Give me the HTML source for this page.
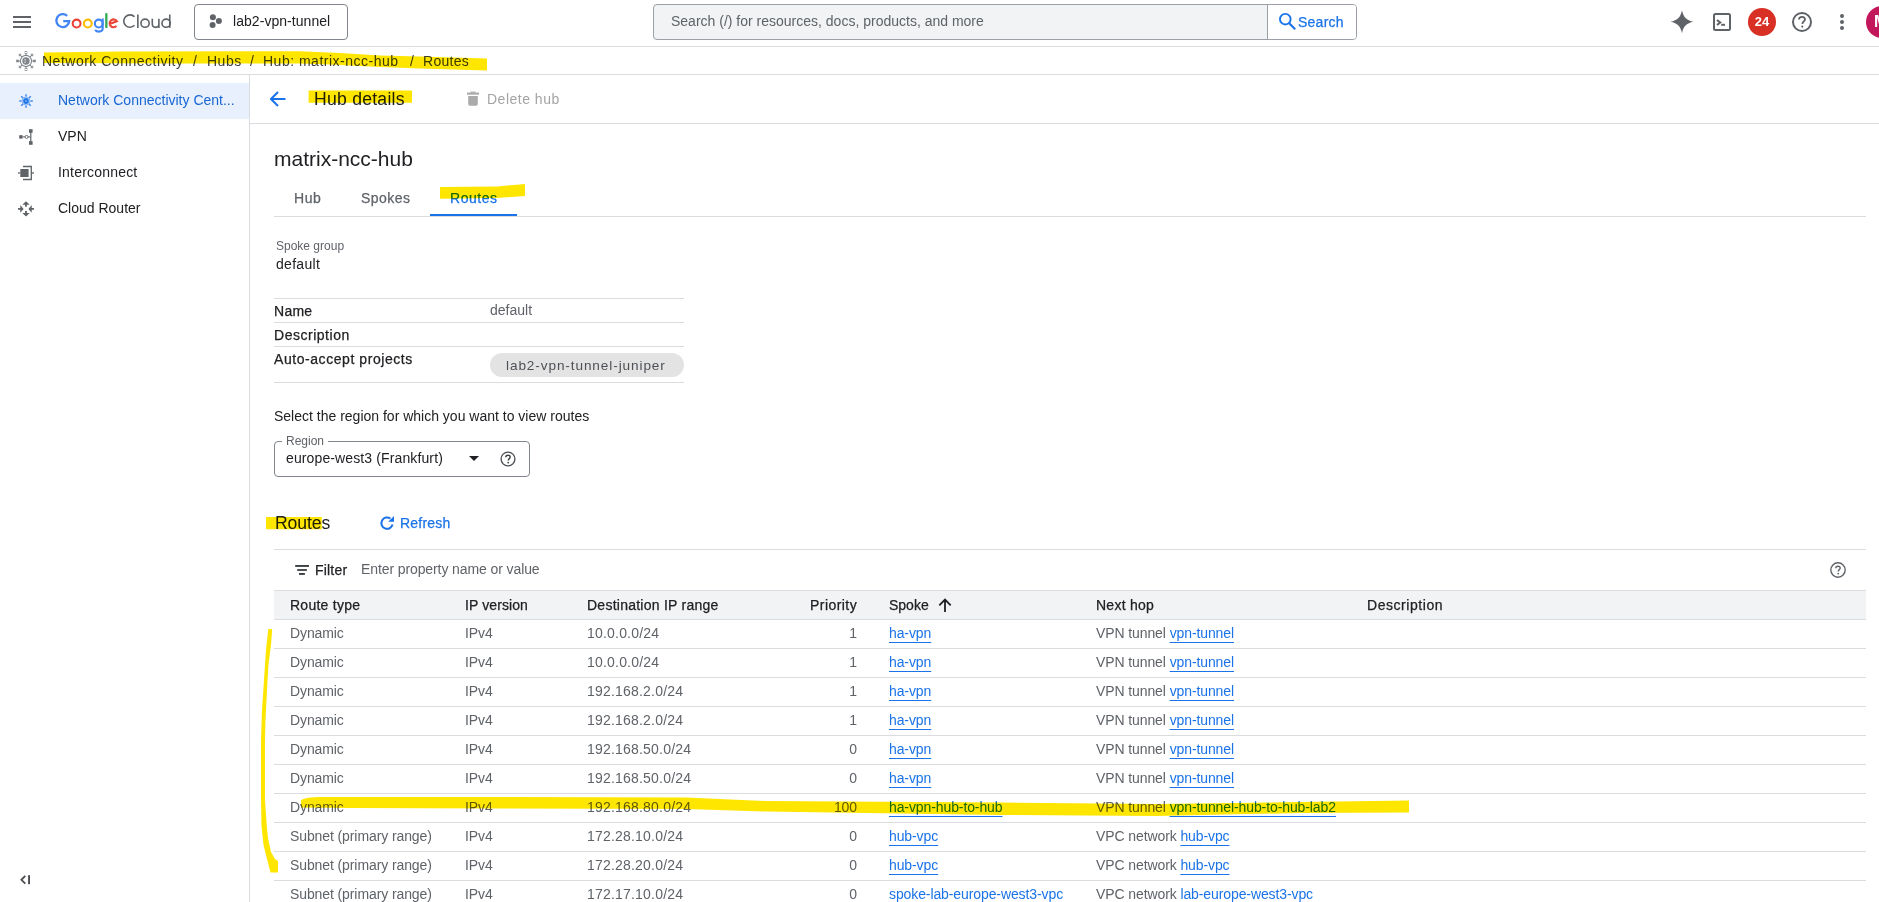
<!DOCTYPE html>
<html><head><meta charset="utf-8">
<style>
*{box-sizing:border-box;margin:0;padding:0}
html,body{width:1879px;height:902px;overflow:hidden;background:#fff;font-family:"Liberation Sans",sans-serif;color:#202124}
.a{position:absolute;white-space:nowrap;line-height:20px;font-size:14px}
.m{-webkit-text-stroke:0.25px currentColor}
.hl{position:absolute;mix-blend-mode:multiply}
.ln{position:absolute;background:#dadce0;height:1px}
a,.lk{color:#1a73e8;text-decoration:underline;text-underline-offset:4px;text-decoration-thickness:1px}

.row{position:absolute;left:0;height:20px;width:1879px;font-size:14px;line-height:20px;color:#5f6368;white-space:nowrap;letter-spacing:-0.1px}
.row span{position:absolute}
.row .c6 span{position:static}
.c1{left:290px}.c2{left:465px}.c3{left:587px;letter-spacing:0.2px}.c4{left:759px;width:98px;text-align:right}.c5{left:889px}.c6{left:1096px}
</style></head><body>

<!-- TOP BAR -->
<div id="top" style="position:absolute;left:0;top:0;width:1879px;height:46px;background:#fff"></div>
<div class="ln" style="left:0;top:46px;width:1879px"></div>
<!-- hamburger -->
<div style="position:absolute;left:13px;top:16px;width:18px;height:2px;background:#5f6368"></div>
<div style="position:absolute;left:13px;top:21px;width:18px;height:2px;background:#5f6368"></div>
<div style="position:absolute;left:13px;top:26px;width:18px;height:2px;background:#5f6368"></div>
<!-- logo -->
<svg style="position:absolute;left:0;top:0" width="180" height="40" viewBox="0 0 180 40"><g fill="none" stroke-linecap="butt">
<path d="M67.15 15.84 A6.45 6.45 0 1 0 69.23 21.1 H63.2" stroke="#4285f4" stroke-width="2.3"/>
<circle cx="76.6" cy="23.55" r="3.9" stroke="#ea4335" stroke-width="2.1"/>
<circle cx="87.8" cy="23.55" r="3.9" stroke="#fbbc04" stroke-width="2.1"/>
<circle cx="98.75" cy="23.55" r="3.9" stroke="#4285f4" stroke-width="2.1"/>
<path d="M102.7 18.6 V28.3 Q102.7 31.6 98.8 31.6 Q96.4 31.6 95.1 29.8" stroke="#4285f4" stroke-width="2.1"/>
<path d="M106.35 13.2 V27.9" stroke="#34a853" stroke-width="2.3"/>
<path d="M109.6 24 L116.9 21.3 A3.9 3.9 0 1 0 116.5 25.9" stroke="#ea4335" stroke-width="2.1"/>
<path d="M134.5 16.8 A6.2 6.2 0 1 0 134.5 25.3" stroke="#5f6368" stroke-width="1.6"/>
<path d="M137.85 14.4 V27.9" stroke="#5f6368" stroke-width="1.6"/>
<circle cx="145.05" cy="23.2" r="4.1" stroke="#5f6368" stroke-width="1.6"/>
<path d="M152.3 18.8 V24.1 A3.3 3.3 0 0 0 158.9 24.1 M158.9 18.8 V28" stroke="#5f6368" stroke-width="1.6"/>
<circle cx="166.1" cy="23.2" r="4.1" stroke="#5f6368" stroke-width="1.6"/>
<path d="M169.75 14.5 V27.9" stroke="#5f6368" stroke-width="1.6"/>
</g></svg>
<!-- project picker -->
<div style="position:absolute;left:194px;top:4px;width:154px;height:36px;border:1px solid #80868b;border-radius:4px"></div>
<svg style="position:absolute;left:208px;top:13px" width="18" height="18" viewBox="0 0 18 18"><circle cx="4.9" cy="4.3" r="3" fill="#5f6368"/><circle cx="10.9" cy="8" r="3" fill="#5f6368"/><circle cx="4.6" cy="12" r="3" fill="#5f6368"/></svg>
<div class="a" id="proj" style="left:233px;top:11px;letter-spacing:0.05px">lab2-vpn-tunnel</div>
<!-- search -->
<div style="position:absolute;left:653px;top:4px;width:704px;height:36px;border:1px solid #9aa0a6;border-radius:4px;background:#f1f3f4;overflow:hidden">
  <div style="position:absolute;left:613px;top:0;width:90px;height:34px;background:#fff;border-left:1px solid #9aa0a6"></div>
</div>
<div class="a" id="sph" style="left:671px;top:11px;color:#5f6368">Search (/) for resources, docs, products, and more</div>
<svg style="position:absolute;left:1278px;top:12px" width="20" height="20" viewBox="0 0 20 20"><circle cx="7.3" cy="7.2" r="5.3" fill="none" stroke="#1a73e8" stroke-width="1.9"/><line x1="11.2" y1="11.2" x2="17.2" y2="17.3" stroke="#1a73e8" stroke-width="2.1"/></svg>
<div class="a m" id="sbtn" style="left:1298px;top:12px;color:#1a73e8;letter-spacing:0.25px">Search</div>
<!-- right icons -->
<svg style="position:absolute;left:1670px;top:10px" width="24" height="24" viewBox="0 0 24 24"><path d="M12 0.3 C13.2 6.8 16.4 10.6 23.6 11.8 C16.4 13 13.2 16.8 12 23.3 C10.8 16.8 7.6 13 0.4 11.8 C7.6 10.6 10.8 6.8 12 0.3Z" fill="#5f6368"/></svg>
<svg style="position:absolute;left:1712px;top:12px" width="20" height="20" viewBox="0 0 20 20"><rect x="2" y="2" width="16" height="16" rx="1.5" fill="none" stroke="#5f6368" stroke-width="2"/><path d="M5 8 L8.2 10.5 L5 13" fill="none" stroke="#5f6368" stroke-width="2.1"/><rect x="9.2" y="11.8" width="3.8" height="2" fill="#5f6368"/></svg>
<div style="position:absolute;left:1748px;top:8px;width:28px;height:28px;border-radius:50%;background:#d93025"></div>
<div class="a" style="left:1748px;top:12px;width:28px;text-align:center;color:#fff;font-weight:bold;font-size:13px">24</div>
<svg style="position:absolute;left:1791px;top:11px" width="22" height="22" viewBox="0 0 22 22"><circle cx="11" cy="11" r="9" fill="none" stroke="#5f6368" stroke-width="2"/><path d="M8 8.6 C8 6.8 9.4 5.8 11 5.8 C12.7 5.8 14 6.9 14 8.4 C14 10.3 11.4 10.6 11.4 13" fill="none" stroke="#5f6368" stroke-width="1.8"/><circle cx="11.3" cy="15.6" r="1.1" fill="#5f6368"/></svg>
<svg style="position:absolute;left:1838px;top:12px" width="8" height="20" viewBox="0 0 8 20"><circle cx="4" cy="4" r="2" fill="#5f6368"/><circle cx="4" cy="10" r="2" fill="#5f6368"/><circle cx="4" cy="16" r="2" fill="#5f6368"/></svg>
<div style="position:absolute;left:1866px;top:6px;width:32px;height:32px;border-radius:50%;background:#c2185b"></div>
<div class="a" style="left:1874px;top:12px;color:#fff;font-size:16px;font-weight:bold">M</div>

<!-- BREADCRUMB -->
<div class="ln" style="left:0;top:74px;width:1879px"></div>
<svg style="position:absolute;left:16px;top:51px" width="20" height="20" viewBox="0 0 20 20"><circle cx="10" cy="10" r="5.6" fill="none" stroke="#80868b" stroke-width="1.1"/><circle cx="10" cy="10" r="3.7" fill="#80868b"/><rect x="8.3" y="8.2" width="1.6" height="1.2" fill="#fff" opacity="0.7"/><rect x="8.3" y="10.6" width="1.6" height="1.2" fill="#fff" opacity="0.7"/><g stroke="#80868b" stroke-width="1"><line x1="10" y1="2.2" x2="10" y2="4.4"/><line x1="10" y1="15.6" x2="10" y2="17.8"/><line x1="2.2" y1="10" x2="4.4" y2="10"/><line x1="15.6" y1="10" x2="17.8" y2="10"/><line x1="4.5" y1="4.5" x2="6" y2="6"/><line x1="14" y1="14" x2="15.5" y2="15.5"/><line x1="15.5" y1="4.5" x2="14" y2="6"/><line x1="6" y1="14" x2="4.5" y2="15.5"/></g><g fill="none" stroke="#80868b" stroke-width="0.8"><rect x="9.1" y="0.6" width="1.8" height="1.8"/><rect x="9.1" y="17.6" width="1.8" height="1.8"/><rect x="0.6" y="9.1" width="1.8" height="1.8"/><rect x="17.6" y="9.1" width="1.8" height="1.8"/><rect x="3.2" y="3.2" width="1.6" height="1.6"/><rect x="15.2" y="3.2" width="1.6" height="1.6"/><rect x="3.2" y="15.2" width="1.6" height="1.6"/><rect x="15.2" y="15.2" width="1.6" height="1.6"/></g></svg>
<div class="a" style="left:42px;top:51px;color:#3c4043;letter-spacing:0.5px">Network Connectivity</div>
<div class="a" style="left:193px;top:51px;color:#3c4043">/</div>
<div class="a" style="left:207px;top:51px;color:#3c4043;letter-spacing:0.5px">Hubs</div>
<div class="a" style="left:250px;top:51px;color:#3c4043">/</div>
<div class="a" style="left:263px;top:51px;color:#3c4043;letter-spacing:0.5px">Hub: matrix-ncc-hub</div>
<div class="a" style="left:410px;top:51px;color:#3c4043">/</div>
<div class="a" style="left:423px;top:51px;color:#3c4043;letter-spacing:0.3px">Routes</div>

<!-- SIDEBAR -->
<div style="position:absolute;left:249px;top:75px;width:1px;height:827px;background:#dadce0"></div>
<div style="position:absolute;left:0;top:83px;width:249px;height:36px;background:#e8f0fe"></div>
<div class="a" id="nav1" style="left:58px;top:90px;color:#1967d2">Network Connectivity Cent...</div>
<div class="a" id="nav2" style="left:58px;top:126px;color:#202124">VPN</div>
<div class="a" id="nav3" style="left:58px;top:162px;color:#202124;letter-spacing:0.2px">Interconnect</div>
<div class="a" id="nav4" style="left:58px;top:198px;color:#202124">Cloud Router</div>
<svg style="position:absolute;left:20px;top:874px" width="11" height="11" viewBox="0 0 11 11"><path d="M5.3 1.9 L1.4 5.8 L5.3 9.7" fill="none" stroke="#4a4e52" stroke-width="1.8"/><rect x="8.1" y="1.2" width="1.9" height="9" fill="#4a4e52"/></svg>


<!-- sidebar icons -->
<svg style="position:absolute;left:18px;top:93px" width="16" height="16" viewBox="0 0 16 16"><g stroke="#1a73e8" stroke-width="1.5" opacity="0.8"><line x1="8" y1="1.2" x2="8" y2="3.6"/><line x1="8" y1="12.4" x2="8" y2="14.8"/><line x1="1.2" y1="8" x2="3.6" y2="8"/><line x1="12.4" y1="8" x2="14.8" y2="8"/><line x1="3.2" y1="3.2" x2="4.9" y2="4.9"/><line x1="11.1" y1="11.1" x2="12.8" y2="12.8"/><line x1="12.8" y1="3.2" x2="11.1" y2="4.9"/><line x1="4.9" y1="11.1" x2="3.2" y2="12.8"/></g><circle cx="8" cy="8" r="4" fill="none" stroke="#1a73e8" stroke-width="0.7" opacity="0.7"/><circle cx="8" cy="8" r="2.9" fill="#1a73e8"/><circle cx="8" cy="8" r="1.3" fill="#5a9af0"/></svg>
<svg style="position:absolute;left:18px;top:129px" width="16" height="16" viewBox="0 0 16 16"><rect x="1.2" y="6.2" width="3.4" height="3.4" fill="#5f6368"/><line x1="4.6" y1="7.9" x2="7" y2="7.9" stroke="#5f6368" stroke-width="1"/><circle cx="8.6" cy="7.9" r="1.5" fill="none" stroke="#5f6368" stroke-width="0.9"/><line x1="10.1" y1="7.9" x2="12.5" y2="7.9" stroke="#5f6368" stroke-width="1"/><line x1="12.8" y1="2" x2="12.8" y2="14" stroke="#5f6368" stroke-width="1.2"/><rect x="11" y="0.2" width="3.6" height="3.6" fill="#5f6368"/><rect x="11" y="12.2" width="3.6" height="3.6" fill="#5f6368"/></svg>
<svg style="position:absolute;left:18px;top:165px" width="16" height="16" viewBox="0 0 16 16"><rect x="2.3" y="4" width="8.3" height="8" fill="#5f6368"/><path d="M5 1.5 H13.3 V14.5 H5" fill="none" stroke="#5f6368" stroke-width="1.3"/><line x1="0" y1="8" x2="2.3" y2="8" stroke="#5f6368" stroke-width="1.3"/><line x1="13.3" y1="8" x2="16" y2="8" stroke="#5f6368" stroke-width="1.3"/></svg>
<svg style="position:absolute;left:18px;top:201px" width="16" height="16" viewBox="0 0 16 16"><g fill="#5f6368"><path d="M8 0.2 L11.7 3.7 H8.9 V5.7 H7.1 V3.7 H4.3Z"/><path d="M8 15.6 L11.7 12.1 H8.9 V10.1 H7.1 V12.1 H4.3Z"/><path d="M5.6 7.9 L2.3 4.1 V7 H0 V8.8 H2.3 V11.7Z"/><path d="M10.4 7.9 L13.7 4.1 V7 H16 V8.8 H13.7 V11.7Z"/></g></svg>

<!-- HEADER -->
<div class="ln" style="left:250px;top:123px;width:1629px"></div>


<!-- back arrow -->
<svg style="position:absolute;left:270px;top:91px" width="16" height="16" viewBox="0 0 16 16"><path d="M8 1 L1 8 L8 15 M1.5 8 H15.5" fill="none" stroke="#1a73e8" stroke-width="2"/></svg>
<div class="a" id="hd" style="left:314px;top:89px;font-size:17.6px;letter-spacing:0.25px">Hub details</div>
<svg style="position:absolute;left:466px;top:91px" width="14" height="16" viewBox="0 0 14 16"><rect x="1" y="1.6" width="12" height="2.1" fill="#ababab"/><rect x="4.3" y="0.6" width="5.4" height="1.2" fill="#ababab"/><path d="M2.2 5 H11.8 V13 Q11.8 14.7 10.1 14.7 H3.9 Q2.2 14.7 2.2 13 Z" fill="#ababab"/></svg>
<div class="a" id="del" style="left:487px;top:89px;color:#a4a4a4;letter-spacing:0.5px">Delete hub</div>

<div class="a" id="title" style="left:274px;top:149px;font-size:21px">matrix-ncc-hub</div>
<div class="a m" style="left:294px;top:188px;color:#5f6368;letter-spacing:0.6px">Hub</div>
<div class="a m" style="left:361px;top:188px;color:#5f6368;letter-spacing:0.45px">Spokes</div>
<div class="a m" style="left:450px;top:188px;color:#1a73e8;letter-spacing:0.55px">Routes</div>
<div style="position:absolute;left:430px;top:214px;width:87px;height:3px;background:#1a73e8"></div>
<div class="ln" style="left:274px;top:216px;width:1592px"></div>

<div class="a" style="left:276px;top:236px;font-size:12px;color:#5f6368">Spoke group</div>
<div class="a" style="left:276px;top:254px;letter-spacing:0.3px">default</div>
<div class="ln" style="left:274px;top:298px;width:410px"></div>
<div class="ln" style="left:274px;top:322px;width:410px"></div>
<div class="ln" style="left:274px;top:346px;width:410px"></div>
<div class="ln" style="left:274px;top:382px;width:410px"></div>
<div class="a m" style="left:274px;top:301px;letter-spacing:0.27px">Name</div>
<div class="a" style="left:490px;top:300px;color:#5f6368">default</div>
<div class="a m" style="left:274px;top:325px;letter-spacing:0.52px">Description</div>
<div class="a m" style="left:274px;top:349px;letter-spacing:0.56px">Auto-accept projects</div>
<div style="position:absolute;left:490px;top:353px;width:194px;height:24px;border-radius:12px;background:#e3e3e3"></div>
<div class="a" id="chip" style="left:506px;top:356px;font-size:13.6px;color:#4d5156;letter-spacing:0.9px">lab2-vpn-tunnel-juniper</div>

<div class="a" style="left:274px;top:406px">Select the region for which you want to view routes</div>
<div style="position:absolute;left:274px;top:441px;width:256px;height:36px;border:1px solid #80868b;border-radius:4px"></div>
<div class="a" style="left:282px;top:431px;font-size:12px;color:#5f6368;background:#fff;padding:0 4px">Region</div>
<div class="a" style="left:286px;top:448px;letter-spacing:0.12px">europe-west3 (Frankfurt)</div>
<svg style="position:absolute;left:469px;top:456px" width="10" height="5" viewBox="0 0 10 5"><path d="M0 0 H10 L5 5Z" fill="#202124"/></svg>
<svg style="position:absolute;left:499px;top:450px" width="18" height="18" viewBox="0 0 18 18"><circle cx="9" cy="9" r="6.9" fill="none" stroke="#4a4e52" stroke-width="1.35"/><path d="M6.8 7.3 C6.8 5.9 7.8 5.2 9 5.2 C10.3 5.2 11.2 6 11.2 7.1 C11.2 8.6 9.2 8.7 9.2 10.6" fill="none" stroke="#3c4043" stroke-width="1.4"/><circle cx="9.2" cy="12.6" r="0.9" fill="#3c4043"/></svg>

<div class="a" id="rt" style="left:275px;top:513px;font-size:17.6px;letter-spacing:-0.1px">Routes</div>
<svg style="position:absolute;left:379px;top:515px" width="16" height="16" viewBox="0 0 16 16"><path d="M13.6 9.6 A5.7 5.7 0 1 1 11.4 3.5" fill="none" stroke="#1a73e8" stroke-width="2"/><path d="M9.2 6.8 H15 V1 Z" fill="#1a73e8"/></svg>
<div class="a m" style="left:400px;top:513px;color:#1a73e8;letter-spacing:0.2px">Refresh</div>
<div class="ln" style="left:274px;top:549px;width:1592px"></div>
<svg style="position:absolute;left:295px;top:564px" width="14" height="11" viewBox="0 0 14 11"><rect x="0.2" y="1" width="13.8" height="1.9" fill="#3c4043"/><rect x="2.2" y="5.1" width="9.7" height="1.8" fill="#3c4043"/><rect x="4" y="9" width="5.9" height="1.9" fill="#3c4043"/></svg>
<div class="a m" style="left:315px;top:560px;letter-spacing:0.2px">Filter</div>
<div class="a" style="left:361px;top:559px;color:#5f6368;letter-spacing:-0.1px">Enter property name or value</div>
<svg style="position:absolute;left:1829px;top:561px" width="18" height="18" viewBox="0 0 18 18"><circle cx="9" cy="9" r="7.2" fill="none" stroke="#5f6368" stroke-width="1.4"/><path d="M6.8 7.3 C6.8 5.9 7.8 5.2 9 5.2 C10.3 5.2 11.2 6 11.2 7.1 C11.2 8.6 9.2 8.7 9.2 10.6" fill="none" stroke="#5f6368" stroke-width="1.4"/><circle cx="9.2" cy="12.6" r="0.9" fill="#5f6368"/></svg>

<div style="position:absolute;left:274px;top:590px;width:1592px;height:30px;background:#f1f3f4;border-top:1px solid #dadce0;border-bottom:1px solid #dadce0"></div>
<div class="a m" style="left:290px;top:595px;letter-spacing:0.25px">Route type</div>
<div class="a m" style="left:465px;top:595px;letter-spacing:0.1px">IP version</div>
<div class="a m" style="left:587px;top:595px;letter-spacing:0.25px">Destination IP range</div>
<div class="a m" style="left:810px;top:595px;letter-spacing:0.45px">Priority</div>
<div class="a m" style="left:889px;top:595px">Spoke</div>
<svg style="position:absolute;left:938px;top:598px" width="14" height="15" viewBox="0 0 14 15"><path d="M7 14 V1.8 M1.3 7.3 L7 1.6 L12.7 7.3" fill="none" stroke="#202124" stroke-width="1.8"/></svg>
<div class="a m" style="left:1096px;top:595px;letter-spacing:0.25px">Next hop</div>
<div class="a m" style="left:1367px;top:595px;letter-spacing:0.55px">Description</div>
<div class="row" style="top:623px"><span class="c1">Dynamic</span><span class="c2">IPv4</span><span class="c3">10.0.0.0/24</span><span class="c4">1</span><span class="c5 lk">ha-vpn</span><span class="c6">VPN tunnel <span class="lk">vpn-tunnel</span></span></div>
<div class="ln" style="left:274px;top:648px;width:1592px"></div>
<div class="row" style="top:652px"><span class="c1">Dynamic</span><span class="c2">IPv4</span><span class="c3">10.0.0.0/24</span><span class="c4">1</span><span class="c5 lk">ha-vpn</span><span class="c6">VPN tunnel <span class="lk">vpn-tunnel</span></span></div>
<div class="ln" style="left:274px;top:677px;width:1592px"></div>
<div class="row" style="top:681px"><span class="c1">Dynamic</span><span class="c2">IPv4</span><span class="c3">192.168.2.0/24</span><span class="c4">1</span><span class="c5 lk">ha-vpn</span><span class="c6">VPN tunnel <span class="lk">vpn-tunnel</span></span></div>
<div class="ln" style="left:274px;top:706px;width:1592px"></div>
<div class="row" style="top:710px"><span class="c1">Dynamic</span><span class="c2">IPv4</span><span class="c3">192.168.2.0/24</span><span class="c4">1</span><span class="c5 lk">ha-vpn</span><span class="c6">VPN tunnel <span class="lk">vpn-tunnel</span></span></div>
<div class="ln" style="left:274px;top:735px;width:1592px"></div>
<div class="row" style="top:739px"><span class="c1">Dynamic</span><span class="c2">IPv4</span><span class="c3">192.168.50.0/24</span><span class="c4">0</span><span class="c5 lk">ha-vpn</span><span class="c6">VPN tunnel <span class="lk">vpn-tunnel</span></span></div>
<div class="ln" style="left:274px;top:764px;width:1592px"></div>
<div class="row" style="top:768px"><span class="c1">Dynamic</span><span class="c2">IPv4</span><span class="c3">192.168.50.0/24</span><span class="c4">0</span><span class="c5 lk">ha-vpn</span><span class="c6">VPN tunnel <span class="lk">vpn-tunnel</span></span></div>
<div class="ln" style="left:274px;top:793px;width:1592px"></div>
<div class="row" style="top:797px"><span class="c1">Dynamic</span><span class="c2">IPv4</span><span class="c3">192.168.80.0/24</span><span class="c4">100</span><span class="c5 lk">ha-vpn-hub-to-hub</span><span class="c6">VPN tunnel <span class="lk">vpn-tunnel-hub-to-hub-lab2</span></span></div>
<div class="ln" style="left:274px;top:822px;width:1592px"></div>
<div class="row" style="top:826px"><span class="c1">Subnet (primary range)</span><span class="c2">IPv4</span><span class="c3">172.28.10.0/24</span><span class="c4">0</span><span class="c5 lk">hub-vpc</span><span class="c6">VPC network <span class="lk">hub-vpc</span></span></div>
<div class="ln" style="left:274px;top:851px;width:1592px"></div>
<div class="row" style="top:855px"><span class="c1">Subnet (primary range)</span><span class="c2">IPv4</span><span class="c3">172.28.20.0/24</span><span class="c4">0</span><span class="c5 lk">hub-vpc</span><span class="c6">VPC network <span class="lk">hub-vpc</span></span></div>
<div class="ln" style="left:274px;top:880px;width:1592px"></div>
<div class="row" style="top:884px"><span class="c1">Subnet (primary range)</span><span class="c2">IPv4</span><span class="c3">172.17.10.0/24</span><span class="c4">0</span><span class="c5 lk">spoke-lab-europe-west3-vpc</span><span class="c6">VPC network <span class="lk">lab-europe-west3-vpc</span></span></div>

<!-- HIGHLIGHTS -->
<svg style="position:absolute;left:0;top:0;mix-blend-mode:multiply;pointer-events:none" width="1879" height="902" viewBox="0 0 1879 902">
<g fill="#ffe600">
<path d="M44 52.5 L120 51.5 L300 51.2 L340 53 L380 55.5 L420 56.5 L487 58.5 L487 70.5 L420 68.6 L380 67 L330 64.5 L300 63.5 L180 63.5 L44 63 Z"/>
<path d="M308.6 90.6 H412 V102.8 H308.6 Z"/>
<path d="M440 187 L497 186.5 L525 184 L525 196 L497 198 L440 198.7 Z"/>
<path d="M266 517 H321.8 V529.2 H266 Z"/>
<path d="M301 800 Q306 797 320 797 L500 797 L686 797.5 L766 801 L1000 802.5 L1156 804 L1300 802 L1409 800.5 L1409 812.5 L1300 813 L1156 816 L1000 815 L766 811.6 L686 809 L500 808.4 L350 808 L301 807.5 Z"/>
<path d="M268.3 629 L272.2 629 L271 645 L268.5 664 L267 690 L265.5 720 L265 740 L265 800 L266.8 826 L268 838 L271 852 L275 859 L278 861 L278 872.5 L270.5 872.5 L266 855 L263.5 845 L261.5 826 L261 800 L261 740 L262 710 L264 680 L266 650 Z"/>
</g></svg>
</body></html>
